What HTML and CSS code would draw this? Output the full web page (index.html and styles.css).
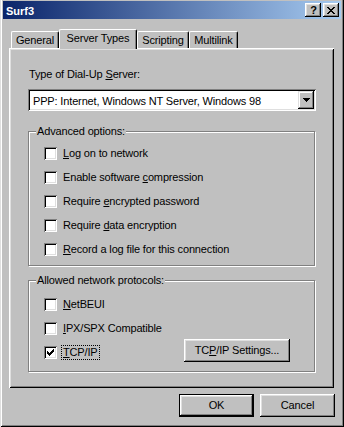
FILE: index.html
```html
<!DOCTYPE html>
<html>
<head>
<meta charset="utf-8">
<title>Surf3</title>
<link rel="stylesheet" href="styles.css">
</head>
<body>
<div class="window">
  <div class="titlebar">
    <span class="title">Surf3</span>
    <div class="caption-buttons">
      <div class="cap-btn help">?</div>
      <div class="cap-btn close">
        <svg width="8" height="7" viewBox="0 0 8 7" shape-rendering="crispEdges">
          <rect x="0" y="0" width="2" height="1"/><rect x="6" y="0" width="2" height="1"/>
          <rect x="1" y="1" width="2" height="1"/><rect x="5" y="1" width="2" height="1"/>
          <rect x="2" y="2" width="4" height="1"/>
          <rect x="3" y="3" width="2" height="1"/>
          <rect x="2" y="4" width="4" height="1"/>
          <rect x="1" y="5" width="2" height="1"/><rect x="5" y="5" width="2" height="1"/>
          <rect x="0" y="6" width="2" height="1"/><rect x="6" y="6" width="2" height="1"/>
        </svg>
      </div>
    </div>
  </div>

  <div class="tabs">
    <div class="tab tab-general">General</div>
    <div class="tab tab-server active">Server Types</div>
    <div class="tab tab-script">Scripting</div>
    <div class="tab tab-multi">Multilink</div>
  </div>

  <div class="panel">
    <div class="field-label">Type of Dial-Up <u>S</u>erver:</div>
    <div class="combo">
      <span class="combo-text">PPP: Internet, Windows NT Server, Windows 98</span>
      <span class="combo-btn">
        <svg width="7" height="4" viewBox="0 0 7 4" shape-rendering="crispEdges">
          <rect x="0" y="0" width="7" height="1"/>
          <rect x="1" y="1" width="5" height="1"/>
          <rect x="2" y="2" width="3" height="1"/>
          <rect x="3" y="3" width="1" height="1"/>
        </svg>
      </span>
    </div>

    <div class="group group-adv">
      <span class="legend">Advanced options:</span>
      <div class="check-row"><span class="checkbox"></span><span class="check-label"><u>L</u>og on to network</span></div>
      <div class="check-row"><span class="checkbox"></span><span class="check-label">Enable software <u>c</u>ompression</span></div>
      <div class="check-row"><span class="checkbox"></span><span class="check-label">Require <u>e</u>ncrypted password</span></div>
      <div class="check-row"><span class="checkbox"></span><span class="check-label">Require <u>d</u>ata encryption</span></div>
      <div class="check-row"><span class="checkbox"></span><span class="check-label"><u>R</u>ecord a log file for this connection</span></div>
    </div>

    <div class="group group-proto">
      <span class="legend">Allowed network protocols:</span>
      <div class="check-row"><span class="checkbox"></span><span class="check-label"><u>N</u>etBEUI</span></div>
      <div class="check-row"><span class="checkbox"></span><span class="check-label"><u>I</u>PX/SPX Compatible</span></div>
      <div class="check-row">
        <span class="checkbox checked">
          <svg width="13" height="13" viewBox="0 0 13 13" shape-rendering="crispEdges">
            <rect x="3" y="5" width="1" height="3"/>
            <rect x="4" y="6" width="1" height="3"/>
            <rect x="5" y="7" width="1" height="3"/>
            <rect x="6" y="6" width="1" height="3"/>
            <rect x="7" y="5" width="1" height="3"/>
            <rect x="8" y="4" width="1" height="3"/>
            <rect x="9" y="3" width="1" height="3"/>
          </svg>
        </span>
        <span class="check-label focused"><u>T</u>CP/IP</span>
        <button class="btn btn-settings">TC<u>P</u>/IP Settings...</button>
      </div>
    </div>
  </div>

  <div class="actions">
    <button class="btn btn-default">OK</button>
    <button class="btn">Cancel</button>
  </div>
</div>
</body>
</html>
```

FILE: styles.css
```css
* { box-sizing: border-box; }

html, body {
  margin: 0;
  padding: 0;
  background: #c0c0c0;
  overflow: hidden;
}

body {
  font-family: "Liberation Sans", Arial, sans-serif;
  font-size: 11px;
  line-height: 13px;
  letter-spacing: -0.15px;
  color: #000;
}

u {
  text-decoration: underline;
  text-decoration-thickness: 1px;
  text-underline-offset: 1px;
}

.window {
  width: 344px;
  height: 429px;
  margin-top: -2px;
  padding: 3px;
  background: #c0c0c0;
  display: flex;
  flex-direction: column;
  box-shadow: inset 1px 1px #dfdfdf, inset -1px -1px #000,
              inset 2px 2px #fff, inset -2px -2px #808080;
}

/* title bar */
.titlebar {
  height: 18px;
  flex: none;
  display: flex;
  align-items: flex-start;
  padding-left: 3px;
  background: linear-gradient(to right, #0a246a, #a6caf0);
  color: #fff;
}

.title {
  font-weight: bold;
  letter-spacing: 0;
  padding-top: 4px;
}

.caption-buttons {
  margin-left: auto;
  margin-right: 2px;
  margin-top: 2px;
  display: flex;
  gap: 2px;
}

.cap-btn {
  width: 16px;
  height: 14px;
  background: #c0c0c0;
  color: #000;
  display: flex;
  align-items: center;
  justify-content: center;
  box-shadow: inset -1px -1px #000, inset 1px 1px #fff,
              inset -2px -2px #808080, inset 2px 2px #dfdfdf;
}

.cap-btn.help {
  font-weight: bold;
  font-size: 11px;
  line-height: 14px;
  letter-spacing: 0;
  padding-left: 1px;
}

.cap-btn.close svg {
  fill: #000;
  margin-left: 0;
  margin-top: 0;
}

/* tabs */
.tabs {
  flex: none;
  height: 19px;
  margin-top: 10px;
  padding-left: 8px;
  display: flex;
  align-items: flex-end;
}

.tab {
  height: 17px;
  padding-top: 2px;
  text-align: center;
  background: #c0c0c0;
  border-top: 1px solid #fff;
  border-left: 1px solid #fff;
  border-right: 1px solid #000;
  border-radius: 2px 2px 0 0;
  box-shadow: inset -1px 0 #808080;
}

.tab-general { width: 48px; }
.tab-server { width: 78px; }
.tab-script { width: 52px; }
.tab-multi { width: 49px; }

.tab.active {
  height: 20px;
  margin-bottom: -1px;
  position: relative;
  z-index: 2;
}

/* panel */
.panel {
  flex: none;
  margin-left: 6px;
  width: 325px;
  height: 340px;
  padding: 20px 0 0 19px;
  display: flex;
  flex-direction: column;
  align-items: flex-start;
  box-shadow: inset 1px 1px #fff, inset -1px -1px #000,
              inset 2px 2px #dfdfdf, inset -2px -2px #808080;
}

.field-label {
  padding-left: 1px;
}

.combo {
  margin-top: 8px;
  width: 288px;
  height: 22px;
  padding: 2px;
  background: #fff;
  display: flex;
  box-shadow: inset 1px 1px #808080, inset -1px -1px #fff,
              inset 2px 2px #000, inset -2px -2px #dfdfdf;
}

.combo-text {
  padding: 4px 0 0 3px;
  white-space: nowrap;
}

.combo-btn {
  margin-left: auto;
  width: 16px;
  height: 18px;
  background: #c0c0c0;
  display: flex;
  align-items: center;
  justify-content: center;
  box-shadow: inset -1px -1px #000, inset 1px 1px #dfdfdf,
              inset -2px -2px #808080, inset 2px 2px #fff;
}

.combo-btn svg { fill: #000; }

/* group boxes */
.group {
  position: relative;
  width: 287px;
  border: 1px solid #808080;
  box-shadow: inset 1px 1px #fff, 1px 1px #fff;
  display: flex;
  flex-direction: column;
  gap: 11px;
}

.group-adv {
  margin-top: 20px;
  padding: 15px 0 9px 15px;
}

.group-proto {
  margin-top: 14px;
  padding: 17px 24px 12px 15px;
}

.legend {
  position: absolute;
  top: -7px;
  left: 7px;
  padding: 0 1px;
  background: #c0c0c0;
  white-space: nowrap;
}

.check-row {
  height: 13px;
  display: flex;
  align-items: center;
}

.checkbox {
  flex: none;
  width: 13px;
  height: 13px;
  background: #fff;
  box-shadow: inset 1px 1px #808080, inset -1px -1px #fff,
              inset 2px 2px #000, inset -2px -2px #dfdfdf;
}

.checkbox svg {
  display: block;
  fill: #000;
}

.check-label {
  margin-left: 5px;
  padding: 0 1px;
  white-space: nowrap;
}

.check-label.focused {
  outline: 1px dotted #000;
  outline-offset: 0;
}

/* buttons */
.btn {
  font: inherit;
  letter-spacing: inherit;
  color: #000;
  background: #c0c0c0;
  border: none;
  margin: 0;
  padding: 0;
  width: 75px;
  height: 23px;
  text-align: center;
  box-shadow: inset -1px -1px #000, inset 1px 1px #fff,
              inset -2px -2px #808080, inset 2px 2px #dfdfdf;
}

.btn-settings {
  width: 106px;
  margin-left: auto;
  align-self: flex-start;
  margin-top: -7px;
}

.btn-default {
  box-shadow: inset 0 0 0 1px #000,
              inset -2px -2px #000, inset 2px 2px #fff,
              inset -3px -3px #808080, inset 3px 3px #dfdfdf;
}

.actions {
  flex: none;
  margin-top: 6px;
  padding-right: 6px;
  display: flex;
  justify-content: flex-end;
  gap: 6px;
}
```
